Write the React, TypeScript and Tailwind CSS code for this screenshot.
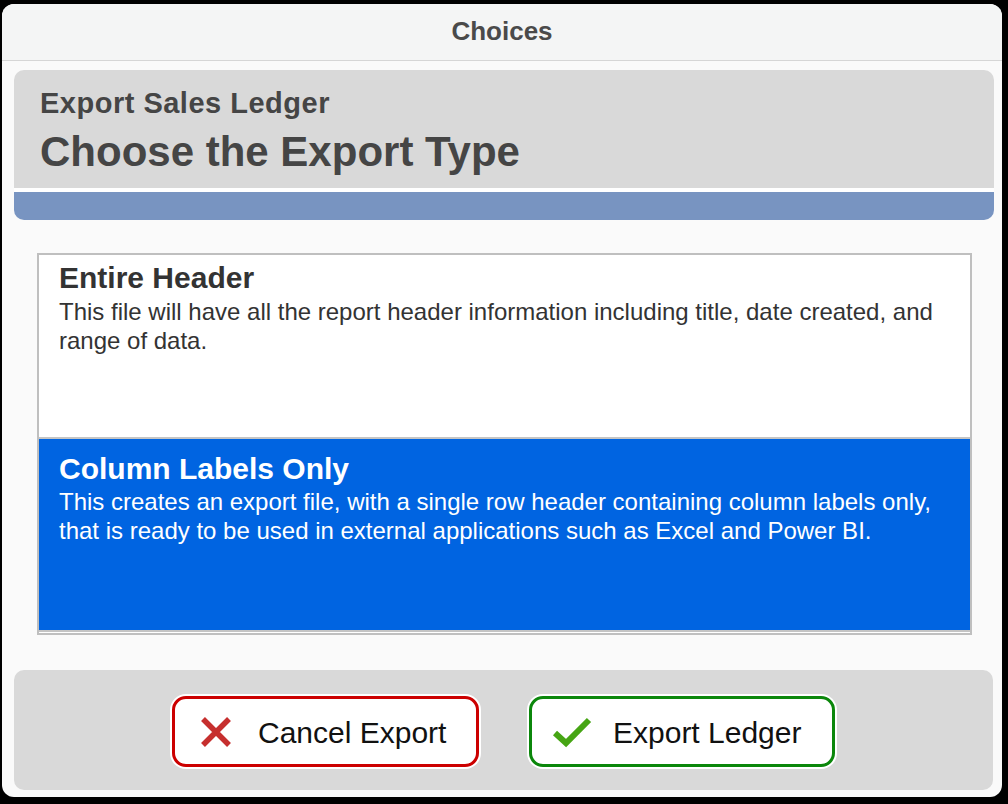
import React from 'react';

const font = { fontFamily: '"Liberation Sans", Arial, Helvetica, sans-serif' };

type Option = {
  title: string;
  text: string;
  selected?: boolean;
  pad: string;
  gap: string;
  height: string;
};

const options: Option[] = [
  {
    title: 'Entire Header',
    text: 'This file will have all the report header information including title, date created, and range of data.',
    pad: 'pt-[6px]',
    gap: 'mt-[2px]',
    height: 'h-[184px]',
  },
  {
    title: 'Column Labels Only',
    text: 'This creates an export file, with a single row header containing column labels only, that is ready to be used in external applications such as Excel and Power BI.',
    selected: true,
    pad: 'pt-[13px]',
    gap: 'mt-[1px]',
    height: 'h-[193px]',
  },
];

const XIcon = () => (
  <svg width="32" height="32" viewBox="0 0 32 32" className="shrink-0">
    <path d="M3 3 L29 29 M29 3 L3 29" stroke="#c62f2e" strokeWidth="5.5" fill="none" />
  </svg>
);

const CheckIcon = () => (
  <svg width="40" height="32" viewBox="0 0 40 32" className="shrink-0">
    <polyline points="3,17 14,27 37,4" stroke="#46a514" strokeWidth="6" fill="none" />
  </svg>
);

const App: React.FC = () => {
  return (
    <div className="min-h-screen bg-black pt-[4px] pl-[2px] pr-[6px] pb-[7px]" style={font}>
      <div className="h-[793px] w-[1000px] bg-[#fafafa] rounded-[12px] overflow-hidden flex flex-col">
        {/* Title bar */}
        <div className="h-[57px] shrink-0 bg-[#f4f5f5] border-b border-[#d6d6d6] flex items-center justify-center pb-[2px]">
          <span className="text-[26px] leading-[30px] font-bold text-[#4a4a4a]">Choices</span>
        </div>

        {/* Heading panel */}
        <div className="mt-[9px] ml-[12px] mr-[8px] rounded-[10px] overflow-hidden shrink-0">
          <div className="h-[118px] bg-[#d9d9d9] pl-[26px] pt-[17px]">
            <div className="text-[29px] leading-[32px] tracking-[0.5px] font-bold text-[#454545]">Export Sales Ledger</div>
            <div className="mt-[9px] text-[42px] leading-[48px] font-bold text-[#454545]">Choose the Export Type</div>
          </div>
          <div className="h-[4px] bg-white" />
          <div className="h-[28px] bg-[#7894c1]" />
        </div>

        {/* Option list */}
        <div className="mt-[33px] ml-[35px] mr-[30px] h-[382px] border-2 border-[#bfbfbf] bg-white shrink-0">
          {options.map((o) => (
            <div
              key={o.title}
              className={`${o.height} ${o.pad} pl-[20px] pr-[20px] border-b-2 border-[#c4c4c4] ${
                o.selected ? 'bg-[#0064e1] text-white' : 'bg-white text-[#333333]'
              }`}
            >
              <div className="text-[30px] leading-[34px] font-bold">{o.title}</div>
              <div className={`${o.gap} text-[24px] leading-[29px]`}>{o.text}</div>
            </div>
          ))}
        </div>

        {/* Footer buttons */}
        <div className="mt-[35px] ml-[12px] mr-[9px] h-[120px] rounded-[10px] bg-[#d9d9d9] flex items-center justify-center gap-[50px] pt-[3px] shrink-0">
          <button className="w-[307px] h-[71px] bg-white border-[3px] border-[#cc0000] rounded-[14px] shadow-[0_0_0_2px_#ffffff] flex items-center pl-[25px] gap-[26px]">
            <XIcon />
            <span className="text-[30px] leading-[34px] text-[#111111] pt-[2px]">Cancel Export</span>
          </button>
          <button className="w-[306px] h-[71px] bg-white border-[3px] border-[#0b870b] rounded-[14px] shadow-[0_0_0_2px_#ffffff] flex items-center pl-[20px] gap-[21px]">
            <CheckIcon />
            <span className="text-[30px] leading-[34px] text-[#111111] pt-[2px]">Export Ledger</span>
          </button>
        </div>
      </div>
    </div>
  );
};

export default App;
